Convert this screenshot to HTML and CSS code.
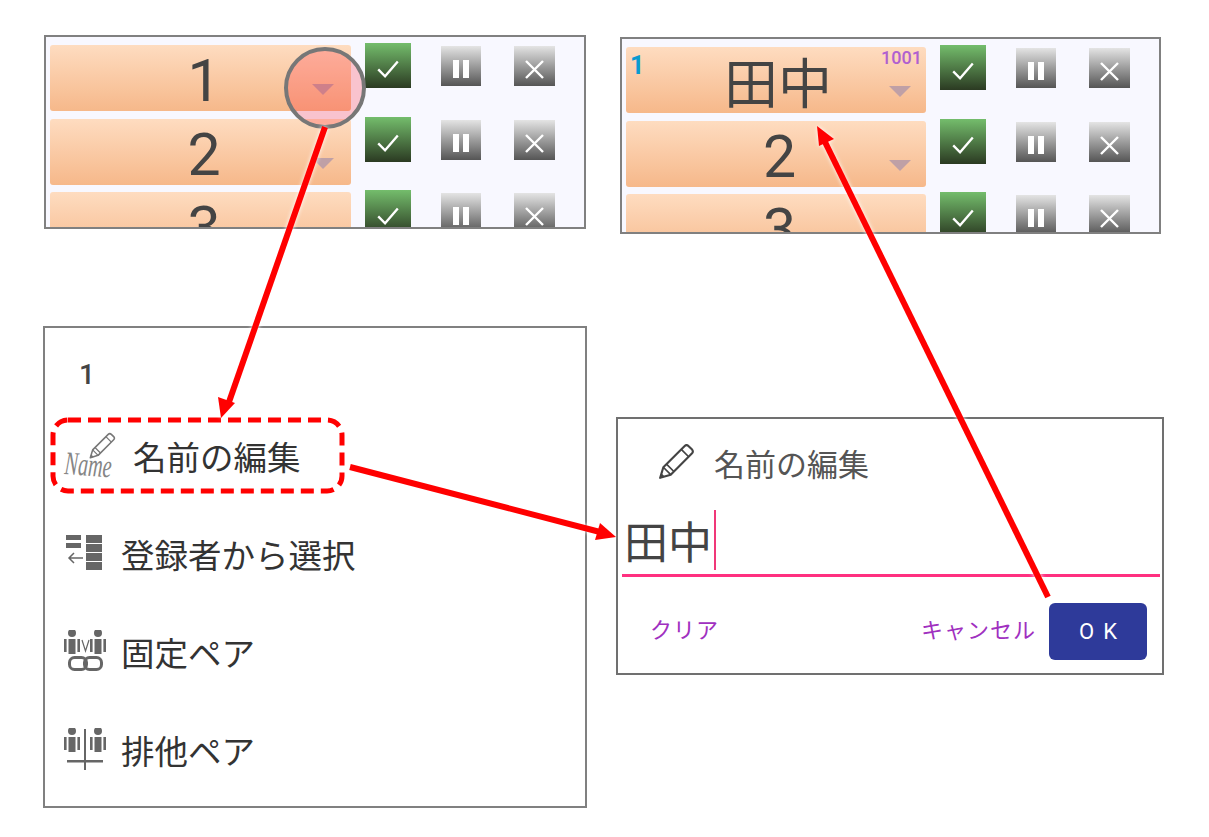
FILE: index.html
```html
<!DOCTYPE html>
<html lang="ja">
  <head>
    <meta charset="UTF-8" />
    <meta name="viewport" content="width=device-width, initial-scale=1.0" />
    <title>名前の編集</title>
    <link rel="stylesheet" href="styles.css">
  </head>
  <body>
    <svg width="0" height="0" class="defs">
      <defs>
        <symbol id="ico-check" viewBox="0 0 46 46">
          <path d="M13 27l7 7 13-15" fill="none" stroke="#fff" stroke-width="2.4" />
        </symbol>
        <symbol id="ico-pause" viewBox="0 0 40 40">
          <rect x="12" y="14" width="6" height="18" fill="#fff" />
          <rect x="22" y="14" width="6" height="18" fill="#fff" />
        </symbol>
        <symbol id="ico-close" viewBox="0 0 41 40">
          <path d="M12 15l17 17M29 15l-17 17" fill="none" stroke="#fff" stroke-width="2.4" />
        </symbol>
        <symbol id="ico-person" viewBox="0 0 18 28">
          <circle cx="9" cy="4" r="4" />
          <rect x="5.500" y="10" width="7" height="15" />
          <rect x="1" y="10" width="2.600" height="13" />
          <rect x="14.400" y="10" width="2.600" height="13" />
        </symbol>
        <symbol id="ico-pencil" viewBox="0 0 36 36">
          <path d="M3 33l3-10L26 3q2-2 4 0l3 3q2 2 0 4L13 30z" fill="none" stroke="currentColor" stroke-width="2" stroke-linejoin="round" />
          <path d="M6 23l7 7M23 6l7 7M9 20l7 7" fill="none" stroke="currentColor" stroke-width="1.600" />
          <path d="M2.500 33.500l1.500-5 3.500 3.500z" fill="currentColor" />
        </symbol>
      </defs>
    </svg>

    <div class="figure">
      <div class="col-left">
        <section class="panel court court-a">
          <div class="row">
            <button class="name-btn"><span class="name">1</span><i class="caret-down"></i></button>
            <span class="act act-ok"><svg><use href="#ico-check" /></svg></span>
            <span class="act act-pause"><svg><use href="#ico-pause" /></svg></span>
            <span class="act act-del"><svg><use href="#ico-close" /></svg></span>
          </div>
          <div class="row">
            <button class="name-btn"><span class="name">2</span><i class="caret-down"></i></button>
            <span class="act act-ok"><svg><use href="#ico-check" /></svg></span>
            <span class="act act-pause"><svg><use href="#ico-pause" /></svg></span>
            <span class="act act-del"><svg><use href="#ico-close" /></svg></span>
          </div>
          <div class="row">
            <button class="name-btn"><span class="name">3</span></button>
            <span class="act act-ok"><svg><use href="#ico-check" /></svg></span>
            <span class="act act-pause"><svg><use href="#ico-pause" /></svg></span>
            <span class="act act-del"><svg><use href="#ico-close" /></svg></span>
          </div>
        </section>

        <section class="panel menu">
          <div class="menu-title">1</div>
          <div class="menu-item">
            <svg class="ico-name" viewBox="0 0 54 50">
              <use href="#ico-pencil" x="25" y="1" width="28" height="28" color="#777" />
              <text x="1" y="43" class="name-script" textLength="47" lengthAdjust="spacingAndGlyphs" transform="rotate(4 1 43)">Name</text>
            </svg>
            <span>名前の編集</span>
          </div>
          <div class="menu-item">
            <svg class="ico" viewBox="0 0 44 44">
              <g fill="#666">
                <rect x="3" y="3" width="15" height="5" />
                <rect x="3" y="11" width="15" height="5" />
                <rect x="23" y="3" width="16" height="8" />
                <rect x="23" y="12" width="16" height="8" />
                <rect x="23" y="21" width="16" height="8" />
                <rect x="23" y="30" width="16" height="8" />
              </g>
              <path d="M20 26H6M11 21l-5 5 5 5" fill="none" stroke="#666" stroke-width="1.500" />
            </svg>
            <span>登録者から選択</span>
          </div>
          <div class="menu-item">
            <svg class="ico" viewBox="0 0 44 44" fill="#666">
              <use href="#ico-person" x="0" y="-1" width="18" height="28" />
              <use href="#ico-person" x="26" y="-1" width="18" height="28" />
              <path d="M19 10l3.500 11 3.500-11" fill="none" stroke="#666" stroke-width="1.200" />
              <rect x="6.500" y="27.500" width="17" height="12" rx="5" fill="none" stroke="#666" stroke-width="3" />
              <rect x="21.500" y="27.500" width="17" height="12" rx="5" fill="none" stroke="#666" stroke-width="3" />
            </svg>
            <span>固定ペア</span>
          </div>
          <div class="menu-item">
            <svg class="ico" viewBox="0 0 44 44" fill="#666">
              <use href="#ico-person" x="0" y="-1" width="18" height="28" />
              <use href="#ico-person" x="26" y="-1" width="18" height="28" />
              <rect x="21" y="1" width="2" height="41" />
              <rect x="4" y="32" width="36" height="2.500" />
            </svg>
            <span>排他ペア</span>
          </div>
        </section>
      </div>

      <div class="col-right">
        <section class="panel court court-b">
          <div class="row">
            <button class="name-btn">
              <span class="court-no">1</span>
              <span class="member-no">1001</span>
              <span class="name name-cjk">田中</span>
              <i class="caret-down"></i>
            </button>
            <span class="act act-ok"><svg><use href="#ico-check" /></svg></span>
            <span class="act act-pause"><svg><use href="#ico-pause" /></svg></span>
            <span class="act act-del"><svg><use href="#ico-close" /></svg></span>
          </div>
          <div class="row">
            <button class="name-btn"><span class="name">2</span><i class="caret-down"></i></button>
            <span class="act act-ok"><svg><use href="#ico-check" /></svg></span>
            <span class="act act-pause"><svg><use href="#ico-pause" /></svg></span>
            <span class="act act-del"><svg><use href="#ico-close" /></svg></span>
          </div>
          <div class="row">
            <button class="name-btn"><span class="name">3</span></button>
            <span class="act act-ok"><svg><use href="#ico-check" /></svg></span>
            <span class="act act-pause"><svg><use href="#ico-pause" /></svg></span>
            <span class="act act-del"><svg><use href="#ico-close" /></svg></span>
          </div>
        </section>

        <section class="panel dialog">
          <div class="dialog-head">
            <svg class="ico-pencil"><use href="#ico-pencil" /></svg>
            <span>名前の編集</span>
          </div>
          <div class="field"><span>田中</span><i class="text-caret"></i></div>
          <div class="dialog-actions">
            <a class="link link-clear">クリア</a>
            <a class="link">キャンセル</a>
            <button class="ok-btn">OK</button>
          </div>
        </section>
      </div>
    </div>

    <!-- annotations drawn over the screenshots -->
    <svg class="notes" viewBox="0 0 1209 837">
      <circle cx="325" cy="88" r="39" class="note-circle" />
      <rect x="53" y="420" width="289" height="71" rx="15" class="note-dash" />
      <g class="note-arrow">
        <path d="M325 127L229 402" class="note-line" />
        <path d="M221 418l-3-21 17 6z" class="note-head" />
      </g>
      <g class="note-arrow">
        <path d="M350 467L600 532" class="note-line" />
        <path d="M616 537l-21 3 5-17z" class="note-head" />
      </g>
      <g class="note-arrow">
        <path d="M1048 597L825 142" class="note-line" />
        <path d="M817 126l17 13-15 7z" class="note-head" />
      </g>
    </svg>
  </body>
</html>
```

FILE: styles.css
```css
* {
  box-sizing: border-box;
}

body {
  font-family: "Noto Sans CJK JP", "Noto Sans", sans-serif;
  background-color: white;
  margin: 0;
  width: 1209px;
  height: 837px;
  position: relative;
  overflow: hidden;
}

.defs {
  position: absolute;
}

.figure {
  display: flex;
  padding-left: 44px;
}

.col-left {
  width: 542px;
  display: flex;
  flex-direction: column;
  padding-top: 35px;
  gap: 97px;
}

.col-right {
  width: 546px;
  margin-left: 31px;
  display: flex;
  flex-direction: column;
  padding-top: 37px;
  gap: 183px;
}

.panel {
  border: 2px solid #808080;
}

/* court screenshots */
.court {
  background-color: #f8f8ff;
  overflow: hidden;
  height: 194px;
  padding: 8px 0 0 4px;
}

.court-b {
  width: 541px;
  margin-left: 3px;
  height: 197px;
}

.row {
  display: flex;
  align-items: flex-start;
  height: 73.500px;
}

.name-btn {
  position: relative;
  width: 301px;
  height: 66px;
  flex: none;
  padding: 6px 0 0 7px;
  border: none;
  border-radius: 3px;
  background: linear-gradient(#fedcc0, #f6b88a);
  color: #444;
  text-align: center;
  font-family: inherit;
}

.court-b .name-btn {
  width: 300px;
}

.name {
  font-family: Roboto, sans-serif;
  font-size: 59px;
  line-height: 60px;
  display: block;
}

.name-cjk {
  font-family: "Noto Sans CJK JP", sans-serif;
  font-size: 54px;
  line-height: 55px;
  padding: 0 3px 5px 0;
}

.court-no {
  position: absolute;
  left: 4px;
  top: 4px;
  font: 700 25px/30px Roboto, sans-serif;
  color: #0a9ad0;
}

.member-no {
  position: absolute;
  right: 4px;
  top: 1px;
  font: 500 18px/20px Roboto, sans-serif;
  color: #b060d0;
}

.caret-down {
  position: absolute;
  right: 17px;
  top: 39px;
  width: 0;
  height: 0;
  border-left: 11px solid transparent;
  border-right: 11px solid transparent;
  border-top: 11px solid #bfa0a6;
}

.court-b .caret-down {
  right: 15px;
}

.act {
  flex: none;
  display: block;
}

.act svg {
  display: block;
  width: 100%;
  height: 100%;
}

.act-ok {
  width: 46px;
  height: 45px;
  margin: -2px 0 0 14px;
  background: linear-gradient(#74bd6c, #2b3a22);
}

.act-pause {
  width: 40px;
  height: 40px;
  margin: 1px 0 0 30px;
  background: linear-gradient(#e4e4e4, #555);
}

.act-del {
  width: 41px;
  height: 40px;
  margin: 1px 0 0 33px;
  background: linear-gradient(#e4e4e4, #555);
}

/* long press menu */
.menu {
  width: 544px;
  height: 482px;
  margin-left: -1px;
  color: #333;
  font-size: 33.500px;
}

.menu-title {
  font: 500 28px/34px Roboto, sans-serif;
  color: #444;
  padding: 30px 0 0 34px;
  margin-bottom: 15px;
}

.menu-item {
  height: 98px;
  display: flex;
  align-items: center;
  padding-left: 18px;
  line-height: 1;
}

.ico {
  width: 44px;
  height: 44px;
  flex: none;
  margin-right: 14px;
}

.ico-name {
  width: 54px;
  height: 50px;
  flex: none;
  margin-right: 16px;
  overflow: visible;
}

.name-script {
  font: italic 33px "Liberation Serif", serif;
  fill: #858585;
}

/* name dialog */
.dialog {
  width: 548px;
  height: 258px;
  margin-left: -1px;
  background-color: white;
  border-color: #707070;
}

.dialog-head {
  display: flex;
  align-items: center;
  height: 36px;
  margin-top: 25px;
  padding-left: 39px;
  color: #555;
  font-size: 31px;
  line-height: 1;
}

.ico-pencil {
  width: 38px;
  height: 38px;
  margin-right: 19px;
  color: #444;
  flex: none;
}

.field {
  display: flex;
  align-items: center;
  height: 72px;
  margin: 25px 2px 0 4px;
  padding-left: 2px;
  border-bottom: 3px solid #ff3080;
  color: #444;
  font-size: 44px;
  line-height: 1;
}

.text-caret {
  display: block;
  width: 2px;
  height: 60px;
  margin-left: 2px;
  background-color: #f03878;
}

.dialog-actions {
  display: flex;
  align-items: center;
  margin-top: 26px;
  padding: 0 15px 0 32px;
}

.link {
  color: #a030c0;
  font-size: 22px;
  line-height: 30px;
  letter-spacing: 1px;
  margin-right: 13px;
  padding-bottom: 7px;
}

.link-clear {
  margin-right: auto;
}

.ok-btn {
  width: 98px;
  height: 57px;
  border: none;
  border-radius: 6px;
  background-color: #2e3a9a;
  color: white;
  font: 400 22px Roboto, sans-serif;
  letter-spacing: 9px;
  padding: 0 0 0 9px;
}

/* annotations */
.notes {
  position: absolute;
  left: 0;
  top: 0;
  width: 1209px;
  height: 837px;
  pointer-events: none;
}

.note-circle {
  fill: rgba(255, 30, 50, 0.24);
  stroke: #777;
  stroke-width: 4;
}

.note-dash {
  fill: none;
  stroke: #f00;
  stroke-width: 5;
  stroke-dasharray: 13 7;
}

.note-arrow {
  filter: drop-shadow(0 0 2px white);
}

.note-line {
  fill: none;
  stroke: #f00;
  stroke-width: 6;
}

.note-head {
  fill: #f00;
}
```
